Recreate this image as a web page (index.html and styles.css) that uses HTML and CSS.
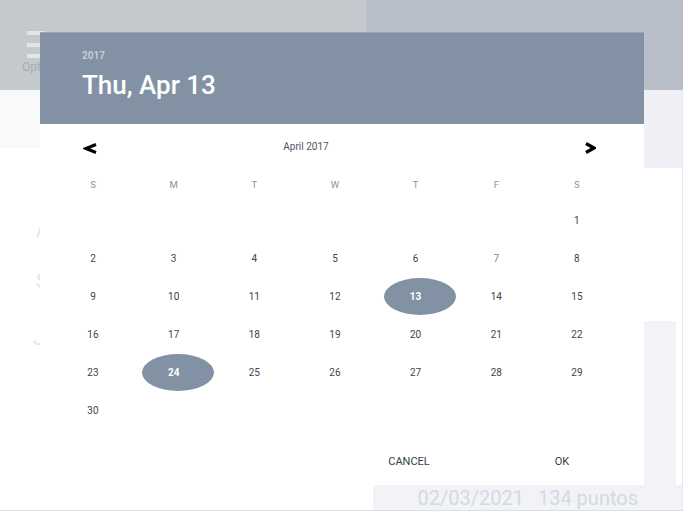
FILE: index.html
```html
<!DOCTYPE html>
<html lang="es">
<head>
<meta charset="utf-8">
<title>Fecha</title>
<link rel="stylesheet" href="styles.css">
</head>
<body>
<div class="app">
  <header class="topbar">
    <div class="topbar-left">
      <div class="menu">
        <span class="menu-icon"><i></i><i></i><i></i></span>
        <span class="menu-label">Options</span>
      </div>
    </div>
    <div class="topbar-right"></div>
  </header>
  <main class="main">
    <section class="col-left">
      <div class="band-left"></div>
      <ul class="ghost-list">
        <li class="g1">A</li>
        <li class="g2">S</li>
        <li class="g3">J</li>
      </ul>
    </section>
    <section class="col-right">
      <div class="band-right"></div>
      <div class="spacer"></div>
      <div class="card"></div>
      <div class="entry"><span>02/03/2021</span><span>134 puntos</span></div>
    </section>
  </main>
</div>

<div class="dialog" role="dialog">
  <div class="dlg-head">
    <div class="year">2017</div>
    <div class="date">Thu, Apr 13</div>
  </div>
  <div class="nav">
    <span class="arrow prev"><svg width="14" height="11" viewBox="0 0 14 11"><polyline points="13,1.5 3,5.5 13,9.5" fill="none" stroke="#000" stroke-width="3" stroke-linejoin="miter"/></svg></span>
    <span class="month">April 2017</span>
    <span class="arrow next"><svg width="12" height="12" viewBox="0 0 12 12"><polyline points="2,1.5 10,6 2,10.5" fill="none" stroke="#000" stroke-width="3.4" stroke-linejoin="miter"/></svg></span>
  </div>
  <div class="weekdays">
    <span>S</span><span>M</span><span>T</span><span>W</span><span>T</span><span>F</span><span>S</span>
  </div>
  <div class="days">
    <span></span><span></span><span></span><span></span><span></span><span></span><span class="d">1</span>
    <span class="d">2</span><span class="d">3</span><span class="d">4</span><span class="d">5</span><span class="d">6</span><span class="d muted">7</span><span class="d">8</span>
    <span class="d">9</span><span class="d">10</span><span class="d">11</span><span class="d">12</span><span class="d sel">13</span><span class="d">14</span><span class="d">15</span>
    <span class="d">16</span><span class="d">17</span><span class="d">18</span><span class="d">19</span><span class="d">20</span><span class="d">21</span><span class="d">22</span>
    <span class="d">23</span><span class="d sel">24</span><span class="d">25</span><span class="d">26</span><span class="d">27</span><span class="d">28</span><span class="d">29</span>
    <span class="d">30</span><span></span><span></span><span></span><span></span><span></span><span></span>
  </div>
  <div class="actions">
    <span class="btn">CANCEL</span>
    <span class="btn">OK</span>
  </div>
</div>
</body>
</html>
```

FILE: styles.css
```css
* { box-sizing: border-box; }
html, body { margin: 0; padding: 0; }
body {
  width: 683px;
  height: 513px;
  overflow: hidden;
  position: relative;
  background: #ffffff;
  font-family: Roboto, "Liberation Sans", sans-serif;
}

.app { width: 683px; }

.topbar {
  display: flex;
  height: 90px;
}
.topbar-left {
  width: 366px;
  background: #c5c8cc;
}
.topbar-right {
  flex: 1;
  background: #b8bfc8;
}
.menu {
  display: flex;
  flex-direction: column;
  align-items: flex-start;
  padding: 31px 0 0 22px;
}
.menu-icon {
  display: flex;
  flex-direction: column;
  gap: 7.5px;
  margin-left: 5px;
  width: 18px;
}
.menu-icon i {
  display: block;
  height: 4px;
  background: #e3e5e8;
}
.menu-label {
  margin-top: 2.4px;
  font-size: 12px;
  line-height: 14px;
  color: #a8acb2;
}

.main {
  display: flex;
  height: 421px;
  border-bottom: 1px solid #dcdfe4;
}
.col-left {
  width: 366px;
}
.band-left {
  height: 58px;
  background: #f8f9fb;
}
.ghost-list {
  list-style: none;
  margin: 0;
  padding: 70px 0 0 36px;
  font-size: 20px;
  line-height: 24px;
  color: #e2e4e9;
}
.ghost-list .g2 { margin-top: 27px; }
.ghost-list .g3 { margin-top: 33px; margin-left: -3px; }

.col-right {
  flex: 1;
  display: flex;
  flex-direction: column;
  border-right: 1px solid #e4e7eb;
}
.band-right {
  height: 78px;
  background: #eef0f5;
}
.spacer { height: 153px; }
.card {
  height: 164px;
  margin: 0 6px 0 7px;
  background: #f2f3f7;
}
.entry {
  height: 25px;
  margin-left: 7px;
  background: #f1f3f7;
  display: flex;
  justify-content: flex-end;
  align-items: center;
  gap: 14px;
  padding-right: 44px;
  font-size: 20px;
  color: #d5d9e0;
}

/* Dialog (modal overlay) */
.dialog {
  position: absolute;
  left: 40px;
  top: 32px;
  width: 604px;
  height: 453px;
  background: #ffffff;
  display: flex;
  flex-direction: column;
}
.dlg-head {
  height: 92px;
  background: #8391a5;
  padding: 18px 0 0 42px;
  border-top: 1px solid #97a3b4;
}
.year {
  font-size: 10px;
  line-height: 12px;
  font-weight: 700;
  color: rgba(255, 255, 255, 0.55);
  margin-top: -1px;
}
.date {
  margin-top: 7.5px;
  font-size: 26px;
  line-height: 30px;
  font-weight: 500;
  color: #ffffff;
}

.nav {
  height: 44px;
  display: flex;
  align-items: center;
  padding: 0 48px 0 43px;
}
.arrow {
  display: flex;
  margin-top: 4px;
}
.month {
  flex: 1;
  text-align: center;
  padding-right: 69px;
  font-size: 10px;
  color: #4f5661;
}

.weekdays, .days {
  display: grid;
  grid-template-columns: repeat(7, 80.67px);
  margin-left: 12.67px;
}
.weekdays {
  height: 33px;
  align-items: center;
  font-size: 9.5px;
  color: #8793a5;
}
.weekdays span { text-align: center; }

.days {
  grid-auto-rows: 38px;
}
.days span {
  display: flex;
  align-items: center;
  justify-content: center;
  position: relative;
  font-size: 10px;
  color: #3f434a;
}
.days .muted { color: #7a8597; }
.days .sel {
  color: #ffffff;
  font-weight: 700;
  isolation: isolate;
}
.days .sel::before {
  content: "";
  position: absolute;
  top: 0.5px;
  left: calc(50% - 32px);
  width: 72px;
  height: 37px;
  border-radius: 50%;
  background: #8391a5;
  z-index: -1;
}

.actions {
  height: 56px;
  padding: 8px 38px 0 0;
  display: flex;
  justify-content: flex-end;
  align-items: center;
  gap: 65px;
}
.btn {
  width: 88px;
  text-align: center;
  font-size: 11px;
  color: #353d48;
}
```
